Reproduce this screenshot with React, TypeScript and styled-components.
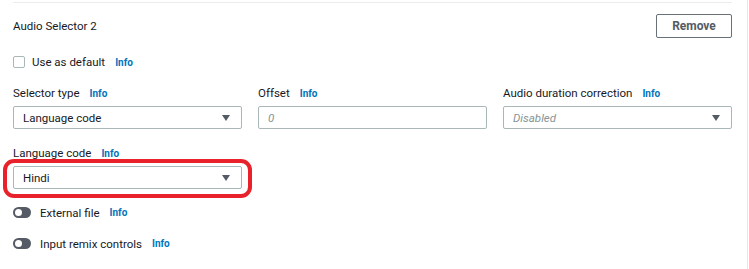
import React from "react";
import styled, { createGlobalStyle } from "styled-components";

const Global = createGlobalStyle`
  html, body { margin: 0; padding: 0; background: #fff; }
  body { font-family: Roboto, "Liberation Sans", Arial, sans-serif; color: #16191f; }
  * { box-sizing: border-box; }
`;

const Page = styled.div`
  width: 748px;
  height: 269px;
  border-right: 1px solid #e4e7e7;
  padding: 2px 15px 0 13px;
  display: flex;
  flex-direction: column;
  overflow: hidden;
`;

const Divider = styled.div`
  height: 1px;
  background: #eaeded;
  width: 719px;
`;

const Header = styled.div`
  display: flex;
  justify-content: space-between;
  align-items: center;
  width: 719px;
  margin-top: 11px;
  height: 24px;
`;

const Title = styled.div`
  font-size: 11.5px;
  color: #16191f;
`;

const Button = styled.button`
  width: 76px;
  height: 24px;
  border: 1px solid #687078;
  border-radius: 2px;
  background: #fff;
  color: #545b64;
  font-family: inherit;
  font-weight: 700;
  font-size: 12px;
  padding: 0;
`;

const CheckRow = styled.label`
  display: flex;
  align-items: center;
  margin-top: 17px;
  height: 14px;
  font-size: 11.5px;
`;

const Box = styled.span`
  width: 12px;
  height: 12px;
  border: 1px solid #aab7b8;
  border-radius: 2px;
  margin-right: 7px;
`;

const Info = styled.span`
  color: #0073bb;
  font-weight: 700;
  font-size: 10px;
  margin-left: 10px;
`;

const Grid = styled.div`
  display: grid;
  grid-template-columns: repeat(3, 229px);
  column-gap: 16px;
  margin-top: 18px;
`;

const Field = styled.div`
  display: flex;
  flex-direction: column;
`;

const Label = styled.div`
  font-size: 11.5px;
  height: 13px;
  line-height: 13px;
  display: flex;
  align-items: center;
  margin-bottom: 6px;
`;

const Control = styled.div<{ $placeholder?: boolean }>`
  position: relative;
  height: 23px;
  border: 1px solid #aab7b8;
  border-radius: 2px;
  display: flex;
  align-items: center;
  justify-content: space-between;
  padding: 0 11px 0 9px;
  font-size: 11.5px;
  color: ${(p) => (p.$placeholder ? "#879596" : "#16191f")};
  font-style: ${(p) => (p.$placeholder ? "italic" : "normal")};
  background: #fff;
`;

const Arrow = styled.span`
  width: 0;
  height: 0;
  border-left: 4.5px solid transparent;
  border-right: 4.5px solid transparent;
  border-top: 6px solid #545b64;
`;

const LangField = styled(Field)`
  margin-top: 18px;
  width: 229px;
`;

const Highlight = styled.div`
  position: absolute;
  left: -11px;
  right: -11px;
  top: -8px;
  bottom: -10px;
  border: 4px solid #e8212a;
  border-radius: 11px;
  pointer-events: none;
`;

const ToggleRow = styled.div<{ $mt: number }>`
  display: flex;
  align-items: center;
  margin-top: ${(p) => p.$mt}px;
  height: 13px;
  font-size: 11.5px;
`;

const Toggle = styled.span`
  position: relative;
  width: 18px;
  height: 11px;
  border-radius: 6px;
  background: #545b64;
  margin-right: 9px;
  &::after {
    content: "";
    position: absolute;
    left: 2px;
    top: 2px;
    width: 7px;
    height: 7px;
    border-radius: 50%;
    background: #fff;
  }
`;

export default function App() {
  return (
    <>
      <Global />
      <Page>
        <Divider />
        <Header>
          <Title>Audio Selector 2</Title>
          <Button>Remove</Button>
        </Header>
        <CheckRow>
          <Box />
          Use as default
          <Info>Info</Info>
        </CheckRow>
        <Grid>
          <Field>
            <Label>
              Selector type<Info>Info</Info>
            </Label>
            <Control>
              Language code
              <Arrow />
            </Control>
          </Field>
          <Field>
            <Label>
              Offset<Info>Info</Info>
            </Label>
            <Control $placeholder>0</Control>
          </Field>
          <Field>
            <Label>
              Audio duration correction<Info>Info</Info>
            </Label>
            <Control $placeholder>
              Disabled
              <Arrow />
            </Control>
          </Field>
        </Grid>
        <LangField>
          <Label>
            Language code<Info>Info</Info>
          </Label>
          <Control>
            Hindi
            <Arrow />
            <Highlight />
          </Control>
        </LangField>
        <ToggleRow $mt={17}>
          <Toggle />
          External file
          <Info>Info</Info>
        </ToggleRow>
        <ToggleRow $mt={18}>
          <Toggle />
          Input remix controls
          <Info>Info</Info>
        </ToggleRow>
      </Page>
    </>
  );
}
